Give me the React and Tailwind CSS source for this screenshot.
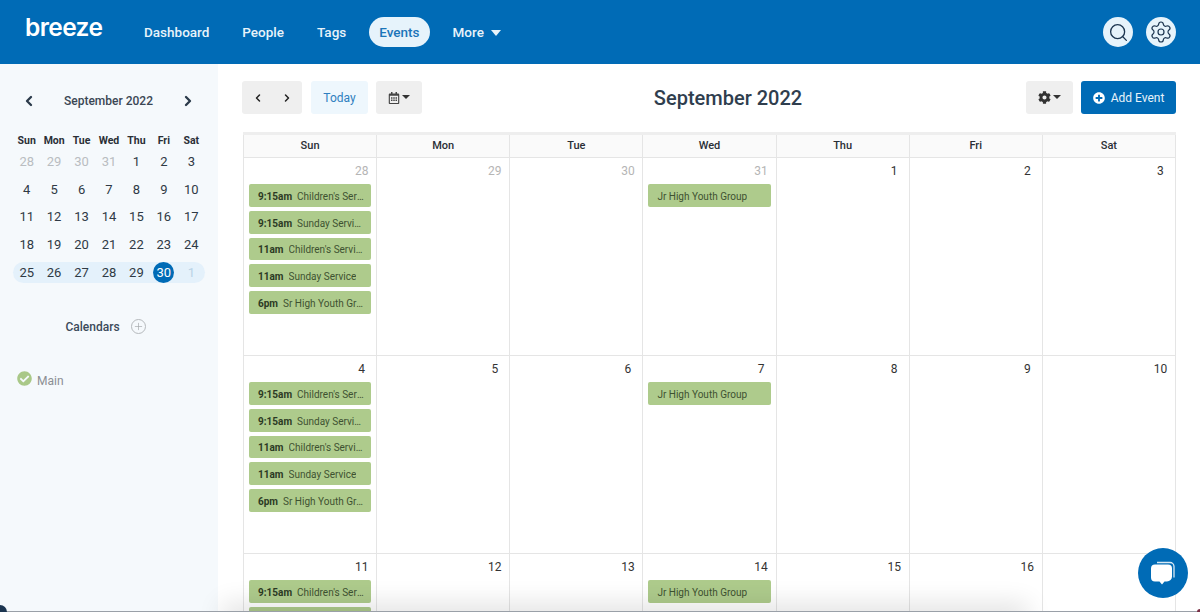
import { FaRegCalendarAlt, FaCog, FaPlusCircle, FaCheckCircle } from "react-icons/fa";
import { Search, Settings, ChevronLeft, ChevronRight, Plus } from "lucide-react";

const NAV = ["Dashboard", "People", "Tags"];
const DAYS = ["Sun", "Mon", "Tue", "Wed", "Thu", "Fri", "Sat"];

const MINI_WEEKS = [
  [28, 29, 30, 31, 1, 2, 3],
  [4, 5, 6, 7, 8, 9, 10],
  [11, 12, 13, 14, 15, 16, 17],
  [18, 19, 20, 21, 22, 23, 24],
];

const SUNDAY_EVENTS = [
  ["9:15am", "Children's Service"],
  ["9:15am", "Sunday Service"],
  ["11am", "Children's Service"],
  ["11am", "Sunday Service"],
  ["6pm", "Sr High Youth Group"],
];

const WEEKS = [
  { days: [28, 29, 30, 31, 1, 2, 3], muted: 4 },
  { days: [4, 5, 6, 7, 8, 9, 10], muted: 0 },
  { days: [11, 12, 13, 14, 15, 16, 17], muted: 0 },
];

const Caret = ({ className = "" }) => (
  <span
    className={`inline-block w-0 h-0 border-x-[4px] border-x-transparent border-t-[4px] border-t-[#333] ${className}`}
  />
);

const Header = () => (
  <header className="h-[64px] shrink-0 bg-[#006bb6] flex items-center pl-[25px] pr-[24px]">
    <div className="w-[119px] -mt-[6px]">
      <span className="text-white text-[24.5px] font-semibold leading-none tracking-[-0.6px] font-['Inter',sans-serif]">
        breeze
      </span>
    </div>
    <nav className="flex items-center text-[13.5px] font-medium text-[#e8f3fa]">
      {NAV.map((item) => (
        <a key={item} className="mr-[33px]">
          {item}
        </a>
      ))}
      <a className="h-[30px] px-[10px] mr-[23px] -ml-[10px] rounded-full bg-[#e6f3fb] text-[#1b75b9] flex items-center">
        Events
      </a>
      <a className="flex items-center gap-[7px]">
        More
        <span className="w-0 h-0 mt-[1px] border-x-[5.5px] border-x-transparent border-t-[6px] border-t-[#e8f3fa]" />
      </a>
    </nav>
    <div className="ml-auto flex items-center gap-[13px]">
      <span className="w-[30px] h-[30px] rounded-full bg-[#e6f3fb] flex items-center justify-center">
        <Search size={21} strokeWidth={1.5} color="#1c3550" />
      </span>
      <span className="w-[30px] h-[30px] rounded-full bg-[#e6f3fb] flex items-center justify-center">
        <Settings size={24} strokeWidth={1.2} color="#1c3550" />
      </span>
    </div>
  </header>
);

const MiniCalendar = () => (
  <div className="px-[13px]">
    <div className="flex items-center justify-between h-[20px] pl-[8px] pr-[9px] text-[#2b3a4a]">
      <ChevronLeft size={16} strokeWidth={3.5} />
      <span className="text-[12px] font-medium text-[#3b4754]">September 2022</span>
      <ChevronRight size={16} strokeWidth={3.5} />
    </div>
    <div className="grid grid-cols-7 mt-[20px] h-[20px] items-center text-center text-[10.5px] font-bold text-[#2a2f36]">
      {DAYS.map((d) => (
        <span key={d}>{d}</span>
      ))}
    </div>
    <div className="-mt-[3px] text-[13px] text-[#2f3a45] text-center">
      {MINI_WEEKS.map((week, w) => (
        <div key={w} className="grid grid-cols-7 h-[27.7px] items-center">
          {week.map((d, i) => (
            <span key={i} className={w === 0 && i < 4 ? "text-[#b9bdc1]" : ""}>
              {d}
            </span>
          ))}
        </div>
      ))}
      <div className="grid grid-cols-7 h-[21px] mt-[3px] items-center rounded-full bg-[#e4f1fb]">
        {[25, 26, 27, 28, 29].map((d) => (
          <span key={d}>{d}</span>
        ))}
        <span className="w-[21px] h-[21px] mx-auto rounded-full bg-[#006bb6] text-white flex items-center justify-center">
          30
        </span>
        <span className="text-[#b9d3e6]">1</span>
      </div>
    </div>
    <div className="mt-[35px] flex items-center justify-center gap-[11px] pr-[7px] text-[12px] font-medium text-[#3b4a5a]">
      Calendars
      <span className="w-[15px] h-[15px] rounded-full border border-[#b5b9bc] flex items-center justify-center">
        <Plus size={11} strokeWidth={1.5} color="#a5a9ac" />
      </span>
    </div>
    <div className="mt-[35px] ml-[4px] flex items-center gap-[5px] text-[12px] text-[#8b8f93]">
      <FaCheckCircle size={15} color="#a9c888" className="-mt-[3px]" />
      <span className="mt-[1px]">Main</span>
    </div>
  </div>
);

const Toolbar = () => (
  <div className="flex items-center h-[33px] text-[12px]">
    <div className="w-[60px] h-[33px] rounded-[3px] bg-[#efefef] flex items-center justify-around px-[1px] text-[#222]">
      <ChevronLeft size={12} strokeWidth={3} />
      <ChevronRight size={12} strokeWidth={3} />
    </div>
    <div className="ml-[9px] w-[57px] h-[33px] rounded-[3px] bg-[#eef7fd] text-[#2f7fbf] flex items-center justify-center">
      Today
    </div>
    <div className="ml-[8px] w-[46px] h-[33px] rounded-[3px] bg-[#efefef] flex items-center justify-center gap-[2px] text-[#444]">
      <FaRegCalendarAlt size={12} />
      <Caret className="-mt-[2px]" />
    </div>
    <h1 className="flex-1 text-center text-[20px] font-medium text-[#2f3e4e] pl-[8px]">September 2022</h1>
    <div className="w-[47px] h-[33px] rounded-[3px] bg-[#efefef] flex items-center justify-center gap-[2px] text-[#333]">
      <FaCog size={13} />
      <Caret className="-mt-[2px]" />
    </div>
    <div className="ml-[8px] w-[95px] h-[33px] rounded-[3px] bg-[#006bb6] text-[#e8f3fa] flex items-center justify-center gap-[6px]">
      <FaPlusCircle size={12} color="#fff" />
      Add Event
    </div>
  </div>
);

const EventPill = ({ time, title }) => (
  <div className="h-[22.8px] mt-[4px] first:mt-0 pt-[2px] rounded-[2px] bg-[#aecb8c] flex items-center pl-[9px] pr-[7px] text-[10px] text-[#3e5231]">
    {time && <b className="shrink-0 font-bold text-[#2c3a24] mr-[5px]">{time}</b>}
    <span className="truncate">{title}</span>
  </div>
);

const Grid = () => (
  <div className="mt-[18px] ml-[1px] border-t-[3px] border-[#eeeeee] w-[933px]">
    <div className="grid grid-cols-7 h-[23px] border-l border-b border-[#e5e5e5] bg-[#fafafa]">
      {DAYS.map((d) => (
        <div
          key={d}
          className="border-r border-[#e5e5e5] flex items-center justify-center text-[11px] font-medium text-[#2a2f36]"
        >
          {d}
        </div>
      ))}
    </div>
    {WEEKS.map((week) => (
      <div key={week.days[0]} className="grid grid-cols-7 h-[198px] border-l border-b border-[#e5e5e5]">
        {week.days.map((d, i) => (
          <div key={d} className="border-r border-[#e5e5e5] pl-[5px] pr-[5px] pt-[6px] min-w-0">
            <div
              className={`ml-auto mr-[1px] w-[17px] h-[15px] text-center text-[12px] leading-[15px] ${
                i < week.muted ? "text-[#b5b5b5]" : "text-[#333]"
              }`}
            >
              {d}
            </div>
            <div className="mt-[5px]">
              {i === 0 && SUNDAY_EVENTS.map(([time, title], n) => <EventPill key={n} time={time} title={title} />)}
              {i === 3 && <EventPill title="Jr High Youth Group" />}
            </div>
          </div>
        ))}
      </div>
    ))}
  </div>
);

const ChatBubble = () => (
  <div className="absolute left-[1138px] top-[548px] w-[50px] h-[50px] rounded-full bg-[#006bb6] flex items-center justify-center">
    <svg width="28" height="26" viewBox="0 0 28 26">
      <path d="M8 2.500h13a4 4 0 0 1 4 4v11" fill="none" stroke="#fff" strokeWidth="1.3" opacity="0.85" />
      <path
        d="M6 4.500h13a4 4 0 0 1 4 4v8a5 5 0 0 1-5 5h-2.500L13 24.500 10.500 21.500H6a4 4 0 0 1-4-4v-9a4 4 0 0 1 4-4z"
        fill="#fff"
      />
    </svg>
  </div>
);

export default function App() {
  return (
    <div className="relative w-[1200px] h-[612px] overflow-hidden bg-white flex flex-col font-['Roboto',sans-serif]">
      <Header />
      <div className="flex flex-1 min-h-0">
        <aside className="w-[218px] shrink-0 bg-[#f5f9fc] pt-[27px]">
          <MiniCalendar />
        </aside>
        <main className="flex-1 min-w-0 pt-[17px] px-[24px]">
          <Toolbar />
          <Grid />
        </main>
      </div>
      {/* soft shadow coming up from under the page edge */}
      <div className="absolute left-[230px] right-[180px] -bottom-[10px] h-[10px] shadow-[0_0_26px_8px_rgba(0,0,0,0.12)]" />
      <div className="absolute inset-x-0 bottom-0 h-[1px] bg-[#9aa0a8]" />
      <div className="absolute left-0 bottom-0 w-[7px] h-[7px] bg-[#1c3550] rounded-tr-full" />
      <div className="absolute right-0 bottom-0 w-[3px] h-[3px] bg-[#7a2f45] rounded-tl-full" />
      <ChatBubble />
    </div>
  );
}
